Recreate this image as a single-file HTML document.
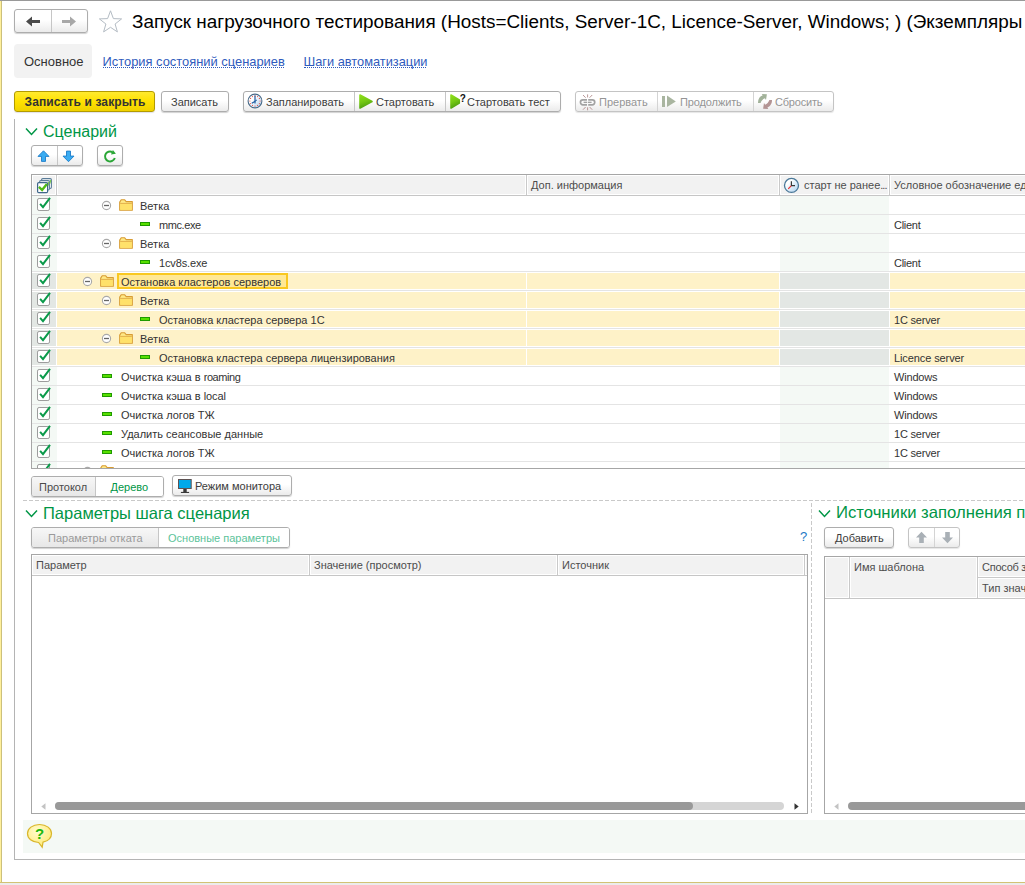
<!DOCTYPE html>
<html lang="ru">
<head>
<meta charset="utf-8">
<title>Запуск нагрузочного тестирования</title>
<style>
html,body{margin:0;padding:0;}
body{width:1025px;height:885px;position:relative;overflow:hidden;background:#fff;
 font-family:"Liberation Sans",sans-serif;font-size:11px;color:#333;}
.abs{position:absolute;}
.nw{white-space:nowrap;}
/* generic 1C button */
.btn{position:absolute;box-sizing:border-box;border:1px solid #adadad;border-radius:3px;
 background:linear-gradient(#ffffff 0%,#ffffff 45%,#ebebeb 100%);
 box-shadow:0 1px 1px rgba(0,0,0,.18);color:#3c3c3c;font-size:11px;line-height:18px;white-space:nowrap;}
.btn .t{position:absolute;top:1px;}
.sep{position:absolute;top:0;bottom:0;width:1px;background:#c6c6c6;}
.dis{color:#9a9a9a;}
.h{position:absolute;font-size:16.3px;color:#009646;white-space:nowrap;line-height:20px;}
.th{position:absolute;font-size:11px;color:#4d4d4d;white-space:nowrap;line-height:14px;}
.tx{position:absolute;font-size:11px;color:#333;white-space:nowrap;line-height:14px;}
.grid{position:absolute;box-sizing:border-box;border:1px solid #a6a6a6;background:#fff;overflow:hidden;}
</style>
</head>
<body>
<!-- window frame -->
<div class="abs" style="left:0;top:0;width:1025px;height:1px;background:#999;"></div>
<div class="abs" style="left:0;top:1px;width:1px;height:881px;background:#fff09c;"></div>
<div class="abs" style="left:1px;top:1px;width:1px;height:881px;background:#ccc07c;"></div>
<div class="abs" style="left:0;top:882px;width:1025px;height:1px;background:#d2c274;"></div>
<div class="abs" style="left:0;top:883px;width:1025px;height:2px;background:#ececec;"></div>

<!-- nav buttons -->
<div class="btn" id="nav" style="left:14px;top:9px;width:74px;height:24px;">
  <div class="sep" style="left:36px;"></div>
  <svg class="abs" style="left:11px;top:6px" width="15" height="11" viewBox="0 0 15 11"><path d="M0 5.5 L6 0.5 V4 H14 V7 H6 V10.5 Z" fill="#4a4a4a"/></svg>
  <svg class="abs" style="left:46px;top:6px" width="15" height="11" viewBox="0 0 15 11"><path d="M15 5.5 L9 0.5 V4 H1 V7 H9 V10.5 Z" fill="#a8a8a8"/></svg>
</div>
<!-- star -->
<svg class="abs" style="left:98px;top:9px" width="25" height="24" viewBox="0 0 25 24"><path d="M12.5 1.8 L15.4 9.6 L23.6 9.9 L17.1 15 L19.4 22.9 L12.5 18.3 L5.6 22.9 L7.9 15 L1.4 9.9 L9.6 9.6 Z" fill="#fff" stroke="#b4bcc4" stroke-width="1"/></svg>
<!-- title -->
<div class="abs nw" id="title" style="left:132px;top:10px;font-size:18.9px;line-height:24px;color:#000;">Запуск нагрузочного тестирования (Hosts=Clients, Server-1C, Licence-Server, Windows; ) (Экземпляры тестирования)</div>

<!-- tabs -->
<div class="abs" style="left:14px;top:44px;width:78px;height:34px;background:#f2f2f2;border-radius:4px;"></div>
<div class="abs nw" id="tab1" style="left:24px;top:54px;font-size:13px;line-height:16px;color:#333;">Основное</div>
<div class="abs nw lnk" id="tab2" style="left:102.5px;top:54px;font-size:12.9px;line-height:16px;color:#2f5bbd;">История состояний сценариев</div>
<div class="abs" style="left:103px;top:67px;width:181px;height:0;border-top:1px dotted #2f5bbd;"></div>
<div class="abs nw lnk" id="tab3" style="left:303.5px;top:54px;font-size:12.8px;line-height:16px;color:#2f5bbd;">Шаги автоматизации</div>
<div class="abs" style="left:304px;top:67px;width:122px;height:0;border-top:1px dotted #2f5bbd;"></div>

<!-- TOOLBAR -->
<!--TB--><div class="abs" id="b1" style="left:14px;top:91px;width:141px;height:21px;box-sizing:border-box;border:1px solid #b39b00;border-radius:3px;background:linear-gradient(#ffea30 0%,#ffe100 50%,#f0d200 100%);box-shadow:0 1px 1px rgba(0,0,60,.12);">
  <div class="abs nw" id="b1t" style="left:9.5px;top:3px;font-size:12px;font-weight:bold;line-height:15px;color:#333;letter-spacing:0.12px;">Записать и закрыть</div>
</div>
<div class="btn" id="b2" style="left:161px;top:91px;width:68px;height:21px;"><span class="t" style="left:9px;">Записать</span></div>
<div class="btn" id="g1" style="left:243px;top:91px;width:318px;height:21px;">
  <div class="sep" style="left:110px;"></div>
  <div class="sep" style="left:201px;"></div>
  <svg class="abs" style="left:3.3px;top:1.3px" width="16" height="16" viewBox="0 0 16 16">
    <defs><linearGradient id="ck" x1="0" y1="0" x2="1" y2="1"><stop offset="0.35" stop-color="#ffffff"/><stop offset="1" stop-color="#a9cdee"/></linearGradient></defs>
    <circle cx="8" cy="8" r="6.9" fill="url(#ck)" stroke="#4a6a88" stroke-width="1.1"/>
    <circle cx="8.00" cy="2.90" r="0.6" fill="#e8564a"/><circle cx="10.55" cy="3.58" r="0.6" fill="#e8564a"/><circle cx="12.42" cy="5.45" r="0.6" fill="#e8564a"/><circle cx="13.10" cy="8.00" r="0.6" fill="#e8564a"/><circle cx="12.42" cy="10.55" r="0.6" fill="#e8564a"/><circle cx="10.55" cy="12.42" r="0.6" fill="#e8564a"/><circle cx="8.00" cy="13.10" r="0.6" fill="#e8564a"/><circle cx="5.45" cy="12.42" r="0.6" fill="#e8564a"/><circle cx="3.58" cy="10.55" r="0.6" fill="#e8564a"/><circle cx="2.90" cy="8.00" r="0.6" fill="#e8564a"/><circle cx="3.58" cy="5.45" r="0.6" fill="#e8564a"/><circle cx="5.45" cy="3.58" r="0.6" fill="#e8564a"/>
    <path d="M8 2.4 V10.4" fill="none" stroke="#1f5aa0" stroke-width="1.2"/><path d="M8.2 8.3 L4.8 10.3" fill="none" stroke="#1f5aa0" stroke-width="1.2"/><path d="M8 8 L10 7" stroke="#1f5aa0" stroke-width="0.9"/>
  </svg>
  <span class="t" style="left:22px;">Запланировать</span>
  <svg class="abs" style="left:114px;top:1px" width="16" height="17" viewBox="0 0 16 17"><defs><linearGradient id="pg" x1="0" y1="0" x2="0.3" y2="1"><stop offset="0" stop-color="#8ede1a"/><stop offset="0.55" stop-color="#74c814"/><stop offset="1" stop-color="#4fa010"/></linearGradient></defs><path d="M2 2 L14 8.5 L2 15 Z" fill="url(#pg)" stroke="url(#pg)" stroke-width="1.6" stroke-linejoin="round"/></svg>
  <span class="t" style="left:132px;">Стартовать</span>
  <svg class="abs" style="left:205px;top:1px" width="18" height="17" viewBox="0 0 18 17"><path d="M2 2 L10.3 6.9 V10.1 L2 15 Z" fill="url(#pg)" stroke="url(#pg)" stroke-width="1.6" stroke-linejoin="round"/>
  <text x="10.8" y="8.8" font-family="Liberation Sans, sans-serif" font-weight="bold" font-size="10" fill="#111" stroke="#fff" stroke-width="1.4" paint-order="stroke">?</text></svg>
  <span class="t" style="left:223px;">Стартовать тест</span>
</div>
<div class="btn dis" id="g2" style="left:575px;top:91px;width:259px;height:21px;border-color:#c4c4c4;box-shadow:0 1px 1px rgba(0,0,0,.10);color:#959595;">
  <div class="sep" style="left:81px;background:#d4d4d4;"></div>
  <div class="sep" style="left:177px;background:#d4d4d4;"></div>
  <svg class="abs" style="left:3px;top:1px" width="17" height="18" viewBox="579 93 17 18" fill="none">
    <g stroke="#a2a2a2" stroke-width="1.7">
    <path d="M587 99.9 H582.9 a2.45 2.45 0 0 0 0 4.9 H587"/><path d="M583.6 102.35 H587.2" stroke-width="1.4"/>
    <path d="M588.2 99.9 H592.3 a2.45 2.45 0 0 1 0 4.9 H588.2"/><path d="M588 102.35 H591.6" stroke-width="1.4"/></g>
    <g stroke="#a87c7c" stroke-width="0.8">
    <path d="M587.6 94.4 V97.4 M583 95 L585.6 97.7 M592.2 95 L589.6 97.7"/>
    <path d="M587.6 110.3 V107.3 M583 109.7 L585.6 107 M592.2 109.7 L589.6 107"/></g>
  </svg>
  <span class="t" style="left:23px;">Прервать</span>
  <svg class="abs" style="left:85px;top:3px" width="16" height="13" viewBox="661 95 16 13"><rect x="662" y="96" width="3" height="11" fill="#a9b5a0"/><path d="M667 95.6 L675.8 101.4 L667 107 Z" fill="#a9b5a0"/></svg>
  <span class="t" style="left:104px;letter-spacing:-0.12px;">Продолжить</span>
  <svg class="abs" style="left:181px;top:1px" width="16" height="17" viewBox="757 93 16 17">
    <path d="M758 102.9 C757.9 99 760 96.3 762.6 95.6 L761.8 94 L766.9 94.3 L766 99.9 L764.9 98.3 C763 99 761.4 100.6 760.6 102.9 Z" fill="#a2b29a"/>
    <path d="M772 100.1 C772.1 104 770 106.7 767.4 107.4 L768.2 109 L763.1 108.7 L764 103.1 L765.1 104.7 C767 104 768.6 102.4 769.4 100.1 Z" fill="#b39494"/>
  </svg>
  <span class="t" style="left:199px;letter-spacing:-0.2px;">Сбросить</span>
</div><!--/TB-->

<!-- main frame -->
<div class="abs" style="left:14px;top:119px;width:1px;height:741px;background:#b4b4b4;"></div>
<div class="abs" style="left:14px;top:859px;width:1011px;height:1px;background:#b4b4b4;"></div>

<!-- SECTION1 -->
<!--S1--><svg class="abs" style="left:25px;top:127px" width="13" height="9" viewBox="0 0 13 9"><path d="M1 1.5 L6.5 7.5 L12 1.5" fill="none" stroke="#009646" stroke-width="1.5"/></svg>
<div class="h" id="h1" style="left:43px;top:121.5px;font-size:16px;">Сценарий</div>
<div class="btn" style="left:31px;top:145px;width:52px;height:21px;"><div class="sep" style="left:25px;"></div>
<svg class="abs" style="left:5px;top:4px" width="13" height="13" viewBox="0 0 13 13"><path d="M6.5 0.8 L12 6.4 H8.5 V11.4 H4.5 V6.4 H1 Z" fill="#3aacf2" stroke="#1c7cc8" stroke-width="0.9" stroke-linejoin="round"/></svg>
<svg class="abs" style="left:30px;top:4px" width="13" height="13" viewBox="0 0 13 13"><path d="M6.5 11.7 L12 6.1 H8.5 V1.1 H4.5 V6.1 H1 Z" fill="#3aacf2" stroke="#1c7cc8" stroke-width="0.9" stroke-linejoin="round"/></svg></div>
<div class="btn" style="left:97px;top:145px;width:26px;height:21px;">
<svg class="abs" style="left:5px;top:3px" width="14" height="14" viewBox="0 0 14 14"><path d="M11.8 9 A5 5 0 1 1 9.3 3" fill="none" stroke="#2aa636" stroke-width="2"/><path d="M9.9 0.9 L12.9 4.7 L8 5.4 Z" fill="#2aa636"/></svg></div>
<div class="grid" id="grid1" style="left:31px;top:174px;width:1000px;height:295px;border-right:none;">
<div class="abs" style="left:0;top:20px;width:1000px;height:1px;background:#c6c6c6;"></div>
<div class="abs" style="left:1px;top:1px;width:22px;height:18px;background:#f2f2f2;"></div>
<div class="abs" style="left:26px;top:1px;width:467px;height:18px;background:#f2f2f2;"></div>
<div class="abs" style="left:496px;top:1px;width:250px;height:18px;background:#f2f2f2;"></div>
<div class="abs" style="left:749px;top:1px;width:107px;height:18px;background:#f2f2f2;"></div>
<div class="abs" style="left:859px;top:1px;width:148px;height:18px;background:#f2f2f2;"></div>
<div class="abs" style="left:24px;top:0;width:1px;height:20px;background:#c9c9c9;"></div>
<div class="abs" style="left:494px;top:0;width:1px;height:20px;background:#c9c9c9;"></div>
<div class="abs" style="left:747px;top:0;width:1px;height:20px;background:#c9c9c9;"></div>
<div class="abs" style="left:857px;top:0;width:1px;height:20px;background:#c9c9c9;"></div>
<svg class="abs" style="left:4px;top:2px" width="17" height="17" viewBox="0 0 17 17">
<rect x="5.6" y="1.6" width="9.8" height="9.8" rx="1.2" fill="#fff" stroke="#5a7c98" stroke-width="1.1"/><path d="M14.6 3 L13.6 6.5" stroke="#7cc850" stroke-width="1.6"/>
<rect x="3.6" y="3.6" width="9.8" height="9.4" rx="1.2" fill="#fff" stroke="#5a7c98" stroke-width="1.1"/><path d="M12.6 5 L11.8 8.5" stroke="#7cc850" stroke-width="1.6"/>
<rect x="1.6" y="5.6" width="10" height="10" rx="1.2" fill="#fff" stroke="#3f678a" stroke-width="1.2"/>
<path d="M2.9 9.9 L6.1 13 L10.9 7" fill="none" stroke="#4fba16" stroke-width="2.4"/></svg>
<div class="th" style="left:499px;top:3px;">Доп. информация</div>
<svg class="abs" style="left:751px;top:2px" width="17" height="17" viewBox="0 0 17 17"><defs><linearGradient id="cg" x1="0" y1="0" x2="1" y2="1"><stop offset="0.3" stop-color="#ffffff"/><stop offset="1" stop-color="#a8d0f0"/></linearGradient></defs><circle cx="8.5" cy="8.4" r="7" fill="url(#cg)" stroke="#4a7898" stroke-width="1.3"/><path d="M8.4 4.2 V8.6 H12" fill="none" stroke="#383838" stroke-width="1.2"/><path d="M8 9 L5.1 12" stroke="#f01414" stroke-width="1.3" stroke-dasharray="1 0.4"/></svg>
<div class="th" style="left:772px;top:3px;">старт не ранее<span style="letter-spacing:-1px;">...</span></div>
<div class="th" style="left:862px;top:3px;">Условное обозначение единицы оборудования</div>
<div class="abs" style="left:0;top:21px;width:25px;height:280px;background:#f4f9f5;"></div>
<div class="abs" style="left:748px;top:21px;width:109px;height:280px;background:#f4f9f5;"></div>
<div class="abs" style="left:0;top:39px;width:1000px;height:1px;background:#e4e4e4;"></div>
<svg class="abs" style="left:4px;top:20px" width="16" height="16" viewBox="0 0 16 16"><rect x="1.5" y="3.5" width="12" height="12" rx="1.6" fill="#fff" stroke="#9c9c9c"/><path d="M4.1 8.9 L7 12.2 L14 2.9" fill="none" stroke="#0a9a4a" stroke-width="2"/></svg>
<svg class="abs" style="left:69px;top:25px" width="11" height="11" viewBox="0 0 11 11"><circle cx="5.5" cy="5.5" r="4.1" fill="#fff" stroke="#a9a9a9" stroke-width="1.1"/><path d="M3 5.5 H8" stroke="#666" stroke-width="1.3"/></svg>
<svg class="abs" style="left:87px;top:24px" width="14" height="12" viewBox="0 0 14 12"><path d="M0.7 11.3 V3.1 L2.2 0.7 H5.5 L7.2 2.6 H13.3 V11.3 Z" fill="#ffe986" stroke="#d89c34" stroke-width="1.1" stroke-linejoin="round"/><path d="M1.2 4.7 H12.8 V10.8 H1.2 Z" fill="#ffe16a"/><path d="M1.2 4.4 H12.8" stroke="#e0aa44" stroke-width="0.9"/></svg>
<div class="tx" style="left:108px;top:24px;">Ветка</div>
<div class="abs" style="left:0;top:58px;width:1000px;height:1px;background:#e4e4e4;"></div>
<svg class="abs" style="left:4px;top:39px" width="16" height="16" viewBox="0 0 16 16"><rect x="1.5" y="3.5" width="12" height="12" rx="1.6" fill="#fff" stroke="#9c9c9c"/><path d="M4.1 8.9 L7 12.2 L14 2.9" fill="none" stroke="#0a9a4a" stroke-width="2"/></svg>
<div class="abs" style="left:108px;top:47px;width:10px;height:4px;box-sizing:border-box;border:1px solid #1f9a00;background:#58e000;"></div>
<div class="tx" style="left:127px;top:43px;letter-spacing:-0.42px;">mmc.exe</div>
<div class="tx" style="left:862px;top:43px;letter-spacing:-0.28px;">Client</div>
<div class="abs" style="left:0;top:77px;width:1000px;height:1px;background:#e4e4e4;"></div>
<svg class="abs" style="left:4px;top:58px" width="16" height="16" viewBox="0 0 16 16"><rect x="1.5" y="3.5" width="12" height="12" rx="1.6" fill="#fff" stroke="#9c9c9c"/><path d="M4.1 8.9 L7 12.2 L14 2.9" fill="none" stroke="#0a9a4a" stroke-width="2"/></svg>
<svg class="abs" style="left:69px;top:63px" width="11" height="11" viewBox="0 0 11 11"><circle cx="5.5" cy="5.5" r="4.1" fill="#fff" stroke="#a9a9a9" stroke-width="1.1"/><path d="M3 5.5 H8" stroke="#666" stroke-width="1.3"/></svg>
<svg class="abs" style="left:87px;top:62px" width="14" height="12" viewBox="0 0 14 12"><path d="M0.7 11.3 V3.1 L2.2 0.7 H5.5 L7.2 2.6 H13.3 V11.3 Z" fill="#ffe986" stroke="#d89c34" stroke-width="1.1" stroke-linejoin="round"/><path d="M1.2 4.7 H12.8 V10.8 H1.2 Z" fill="#ffe16a"/><path d="M1.2 4.4 H12.8" stroke="#e0aa44" stroke-width="0.9"/></svg>
<div class="tx" style="left:108px;top:62px;">Ветка</div>
<div class="abs" style="left:0;top:96px;width:1000px;height:1px;background:#e4e4e4;"></div>
<svg class="abs" style="left:4px;top:77px" width="16" height="16" viewBox="0 0 16 16"><rect x="1.5" y="3.5" width="12" height="12" rx="1.6" fill="#fff" stroke="#9c9c9c"/><path d="M4.1 8.9 L7 12.2 L14 2.9" fill="none" stroke="#0a9a4a" stroke-width="2"/></svg>
<div class="abs" style="left:108px;top:85px;width:10px;height:4px;box-sizing:border-box;border:1px solid #1f9a00;background:#58e000;"></div>
<div class="tx" style="left:127px;top:81px;letter-spacing:-0.14px;">1cv8s.exe</div>
<div class="tx" style="left:862px;top:81px;letter-spacing:-0.28px;">Client</div>
<div class="abs" style="left:0;top:97px;width:1000px;height:18px;background:#fff;"></div>
<div class="abs" style="left:0;top:98px;width:24px;height:16px;background:#e3e7e4;"></div>
<div class="abs" style="left:25px;top:98px;width:469px;height:16px;background:#fef2c8;"></div>
<div class="abs" style="left:495px;top:98px;width:252px;height:16px;background:#fef2c8;"></div>
<div class="abs" style="left:748px;top:98px;width:109px;height:16px;background:#e3e7e4;"></div>
<div class="abs" style="left:858px;top:98px;width:200px;height:16px;background:#fef2c8;"></div>
<div class="abs" style="left:0;top:115px;width:1000px;height:1px;background:#e4e4e4;"></div>
<svg class="abs" style="left:4px;top:96px" width="16" height="16" viewBox="0 0 16 16"><rect x="1.5" y="3.5" width="12" height="12" rx="1.6" fill="#fff" stroke="#9c9c9c"/><path d="M4.1 8.9 L7 12.2 L14 2.9" fill="none" stroke="#0a9a4a" stroke-width="2"/></svg>
<svg class="abs" style="left:50px;top:101px" width="11" height="11" viewBox="0 0 11 11"><circle cx="5.5" cy="5.5" r="4.1" fill="#fff" stroke="#a9a9a9" stroke-width="1.1"/><path d="M3 5.5 H8" stroke="#666" stroke-width="1.3"/></svg>
<svg class="abs" style="left:68px;top:100px" width="14" height="12" viewBox="0 0 14 12"><path d="M0.7 11.3 V3.1 L2.2 0.7 H5.5 L7.2 2.6 H13.3 V11.3 Z" fill="#ffe986" stroke="#d89c34" stroke-width="1.1" stroke-linejoin="round"/><path d="M1.2 4.7 H12.8 V10.8 H1.2 Z" fill="#ffe16a"/><path d="M1.2 4.4 H12.8" stroke="#e0aa44" stroke-width="0.9"/></svg>
<div class="abs" style="left:85px;top:98px;width:171px;height:16px;box-sizing:border-box;border:2px solid #f9c820;background:#ffe896;"></div>
<div class="tx" style="left:89px;top:100px;">Остановка кластеров серверов</div>
<div class="abs" style="left:0;top:116px;width:1000px;height:18px;background:#fff;"></div>
<div class="abs" style="left:0;top:117px;width:24px;height:16px;background:#e3e7e4;"></div>
<div class="abs" style="left:25px;top:117px;width:469px;height:16px;background:#fef2c8;"></div>
<div class="abs" style="left:495px;top:117px;width:252px;height:16px;background:#fef2c8;"></div>
<div class="abs" style="left:748px;top:117px;width:109px;height:16px;background:#e3e7e4;"></div>
<div class="abs" style="left:858px;top:117px;width:200px;height:16px;background:#fef2c8;"></div>
<div class="abs" style="left:0;top:134px;width:1000px;height:1px;background:#e4e4e4;"></div>
<svg class="abs" style="left:4px;top:115px" width="16" height="16" viewBox="0 0 16 16"><rect x="1.5" y="3.5" width="12" height="12" rx="1.6" fill="#fff" stroke="#9c9c9c"/><path d="M4.1 8.9 L7 12.2 L14 2.9" fill="none" stroke="#0a9a4a" stroke-width="2"/></svg>
<svg class="abs" style="left:69px;top:120px" width="11" height="11" viewBox="0 0 11 11"><circle cx="5.5" cy="5.5" r="4.1" fill="#fff" stroke="#a9a9a9" stroke-width="1.1"/><path d="M3 5.5 H8" stroke="#666" stroke-width="1.3"/></svg>
<svg class="abs" style="left:87px;top:119px" width="14" height="12" viewBox="0 0 14 12"><path d="M0.7 11.3 V3.1 L2.2 0.7 H5.5 L7.2 2.6 H13.3 V11.3 Z" fill="#ffe986" stroke="#d89c34" stroke-width="1.1" stroke-linejoin="round"/><path d="M1.2 4.7 H12.8 V10.8 H1.2 Z" fill="#ffe16a"/><path d="M1.2 4.4 H12.8" stroke="#e0aa44" stroke-width="0.9"/></svg>
<div class="tx" style="left:108px;top:119px;">Ветка</div>
<div class="abs" style="left:0;top:135px;width:1000px;height:18px;background:#fff;"></div>
<div class="abs" style="left:0;top:136px;width:24px;height:16px;background:#e3e7e4;"></div>
<div class="abs" style="left:25px;top:136px;width:469px;height:16px;background:#fef2c8;"></div>
<div class="abs" style="left:495px;top:136px;width:252px;height:16px;background:#fef2c8;"></div>
<div class="abs" style="left:748px;top:136px;width:109px;height:16px;background:#e3e7e4;"></div>
<div class="abs" style="left:858px;top:136px;width:200px;height:16px;background:#fef2c8;"></div>
<div class="abs" style="left:0;top:153px;width:1000px;height:1px;background:#e4e4e4;"></div>
<svg class="abs" style="left:4px;top:134px" width="16" height="16" viewBox="0 0 16 16"><rect x="1.5" y="3.5" width="12" height="12" rx="1.6" fill="#fff" stroke="#9c9c9c"/><path d="M4.1 8.9 L7 12.2 L14 2.9" fill="none" stroke="#0a9a4a" stroke-width="2"/></svg>
<div class="abs" style="left:108px;top:142px;width:10px;height:4px;box-sizing:border-box;border:1px solid #1f9a00;background:#58e000;"></div>
<div class="tx" style="left:127px;top:138px;">Остановка кластера сервера 1С</div>
<div class="tx" style="left:862px;top:138px;letter-spacing:-0.2px;">1C server</div>
<div class="abs" style="left:0;top:154px;width:1000px;height:18px;background:#fff;"></div>
<div class="abs" style="left:0;top:155px;width:24px;height:16px;background:#e3e7e4;"></div>
<div class="abs" style="left:25px;top:155px;width:469px;height:16px;background:#fef2c8;"></div>
<div class="abs" style="left:495px;top:155px;width:252px;height:16px;background:#fef2c8;"></div>
<div class="abs" style="left:748px;top:155px;width:109px;height:16px;background:#e3e7e4;"></div>
<div class="abs" style="left:858px;top:155px;width:200px;height:16px;background:#fef2c8;"></div>
<div class="abs" style="left:0;top:172px;width:1000px;height:1px;background:#e4e4e4;"></div>
<svg class="abs" style="left:4px;top:153px" width="16" height="16" viewBox="0 0 16 16"><rect x="1.5" y="3.5" width="12" height="12" rx="1.6" fill="#fff" stroke="#9c9c9c"/><path d="M4.1 8.9 L7 12.2 L14 2.9" fill="none" stroke="#0a9a4a" stroke-width="2"/></svg>
<svg class="abs" style="left:69px;top:158px" width="11" height="11" viewBox="0 0 11 11"><circle cx="5.5" cy="5.5" r="4.1" fill="#fff" stroke="#a9a9a9" stroke-width="1.1"/><path d="M3 5.5 H8" stroke="#666" stroke-width="1.3"/></svg>
<svg class="abs" style="left:87px;top:157px" width="14" height="12" viewBox="0 0 14 12"><path d="M0.7 11.3 V3.1 L2.2 0.7 H5.5 L7.2 2.6 H13.3 V11.3 Z" fill="#ffe986" stroke="#d89c34" stroke-width="1.1" stroke-linejoin="round"/><path d="M1.2 4.7 H12.8 V10.8 H1.2 Z" fill="#ffe16a"/><path d="M1.2 4.4 H12.8" stroke="#e0aa44" stroke-width="0.9"/></svg>
<div class="tx" style="left:108px;top:157px;">Ветка</div>
<div class="abs" style="left:0;top:173px;width:1000px;height:18px;background:#fff;"></div>
<div class="abs" style="left:0;top:174px;width:24px;height:16px;background:#e3e7e4;"></div>
<div class="abs" style="left:25px;top:174px;width:469px;height:16px;background:#fef2c8;"></div>
<div class="abs" style="left:495px;top:174px;width:252px;height:16px;background:#fef2c8;"></div>
<div class="abs" style="left:748px;top:174px;width:109px;height:16px;background:#e3e7e4;"></div>
<div class="abs" style="left:858px;top:174px;width:200px;height:16px;background:#fef2c8;"></div>
<div class="abs" style="left:0;top:191px;width:1000px;height:1px;background:#e4e4e4;"></div>
<svg class="abs" style="left:4px;top:172px" width="16" height="16" viewBox="0 0 16 16"><rect x="1.5" y="3.5" width="12" height="12" rx="1.6" fill="#fff" stroke="#9c9c9c"/><path d="M4.1 8.9 L7 12.2 L14 2.9" fill="none" stroke="#0a9a4a" stroke-width="2"/></svg>
<div class="abs" style="left:108px;top:180px;width:10px;height:4px;box-sizing:border-box;border:1px solid #1f9a00;background:#58e000;"></div>
<div class="tx" style="left:127px;top:176px;">Остановка кластера сервера лицензирования</div>
<div class="tx" style="left:862px;top:176px;letter-spacing:-0.1px;">Licence server</div>
<div class="abs" style="left:0;top:210px;width:1000px;height:1px;background:#e4e4e4;"></div>
<svg class="abs" style="left:4px;top:191px" width="16" height="16" viewBox="0 0 16 16"><rect x="1.5" y="3.5" width="12" height="12" rx="1.6" fill="#fff" stroke="#9c9c9c"/><path d="M4.1 8.9 L7 12.2 L14 2.9" fill="none" stroke="#0a9a4a" stroke-width="2"/></svg>
<div class="abs" style="left:70px;top:199px;width:10px;height:4px;box-sizing:border-box;border:1px solid #1f9a00;background:#58e000;"></div>
<div class="tx" style="left:89px;top:195px;">Очистка кэша в <span style="letter-spacing:-0.42px">roaming</span></div>
<div class="tx" style="left:862px;top:195px;letter-spacing:-0.18px;">Windows</div>
<div class="abs" style="left:0;top:229px;width:1000px;height:1px;background:#e4e4e4;"></div>
<svg class="abs" style="left:4px;top:210px" width="16" height="16" viewBox="0 0 16 16"><rect x="1.5" y="3.5" width="12" height="12" rx="1.6" fill="#fff" stroke="#9c9c9c"/><path d="M4.1 8.9 L7 12.2 L14 2.9" fill="none" stroke="#0a9a4a" stroke-width="2"/></svg>
<div class="abs" style="left:70px;top:218px;width:10px;height:4px;box-sizing:border-box;border:1px solid #1f9a00;background:#58e000;"></div>
<div class="tx" style="left:89px;top:214px;">Очистка кэша в <span style="letter-spacing:-0.1px">local</span></div>
<div class="tx" style="left:862px;top:214px;letter-spacing:-0.18px;">Windows</div>
<div class="abs" style="left:0;top:248px;width:1000px;height:1px;background:#e4e4e4;"></div>
<svg class="abs" style="left:4px;top:229px" width="16" height="16" viewBox="0 0 16 16"><rect x="1.5" y="3.5" width="12" height="12" rx="1.6" fill="#fff" stroke="#9c9c9c"/><path d="M4.1 8.9 L7 12.2 L14 2.9" fill="none" stroke="#0a9a4a" stroke-width="2"/></svg>
<div class="abs" style="left:70px;top:237px;width:10px;height:4px;box-sizing:border-box;border:1px solid #1f9a00;background:#58e000;"></div>
<div class="tx" style="left:89px;top:233px;">Очистка логов ТЖ</div>
<div class="tx" style="left:862px;top:233px;letter-spacing:-0.18px;">Windows</div>
<div class="abs" style="left:0;top:267px;width:1000px;height:1px;background:#e4e4e4;"></div>
<svg class="abs" style="left:4px;top:248px" width="16" height="16" viewBox="0 0 16 16"><rect x="1.5" y="3.5" width="12" height="12" rx="1.6" fill="#fff" stroke="#9c9c9c"/><path d="M4.1 8.9 L7 12.2 L14 2.9" fill="none" stroke="#0a9a4a" stroke-width="2"/></svg>
<div class="abs" style="left:70px;top:256px;width:10px;height:4px;box-sizing:border-box;border:1px solid #1f9a00;background:#58e000;"></div>
<div class="tx" style="left:89px;top:252px;">Удалить сеансовые данные</div>
<div class="tx" style="left:862px;top:252px;letter-spacing:-0.2px;">1C server</div>
<div class="abs" style="left:0;top:286px;width:1000px;height:1px;background:#e4e4e4;"></div>
<svg class="abs" style="left:4px;top:267px" width="16" height="16" viewBox="0 0 16 16"><rect x="1.5" y="3.5" width="12" height="12" rx="1.6" fill="#fff" stroke="#9c9c9c"/><path d="M4.1 8.9 L7 12.2 L14 2.9" fill="none" stroke="#0a9a4a" stroke-width="2"/></svg>
<div class="abs" style="left:70px;top:275px;width:10px;height:4px;box-sizing:border-box;border:1px solid #1f9a00;background:#58e000;"></div>
<div class="tx" style="left:89px;top:271px;">Очистка логов ТЖ</div>
<div class="tx" style="left:862px;top:271px;letter-spacing:-0.2px;">1C server</div>
<div class="abs" style="left:0;top:305px;width:1000px;height:1px;background:#e4e4e4;"></div>
<svg class="abs" style="left:4px;top:286px" width="16" height="16" viewBox="0 0 16 16"><rect x="1.5" y="3.5" width="12" height="12" rx="1.6" fill="#fff" stroke="#9c9c9c"/><path d="M4.1 8.9 L7 12.2 L14 2.9" fill="none" stroke="#0a9a4a" stroke-width="2"/></svg>
<svg class="abs" style="left:50px;top:291px" width="11" height="11" viewBox="0 0 11 11"><circle cx="5.5" cy="5.5" r="4.1" fill="#fff" stroke="#a9a9a9" stroke-width="1.1"/><path d="M3 5.5 H8" stroke="#666" stroke-width="1.3"/></svg>
<svg class="abs" style="left:68px;top:290px" width="14" height="12" viewBox="0 0 14 12"><path d="M0.7 11.3 V3.1 L2.2 0.7 H5.5 L7.2 2.6 H13.3 V11.3 Z" fill="#ffe986" stroke="#d89c34" stroke-width="1.1" stroke-linejoin="round"/><path d="M1.2 4.7 H12.8 V10.8 H1.2 Z" fill="#ffe16a"/><path d="M1.2 4.4 H12.8" stroke="#e0aa44" stroke-width="0.9"/></svg>
<div class="tx" style="left:89px;top:290px;">Запуск кластеров серверов</div>
</div>
<div class="btn" id="g3" style="left:31px;top:476px;width:133px;height:21px;">
<div class="abs" style="left:0;top:0;width:63px;height:19px;background:linear-gradient(#f7f7f7,#e7e7e7);border-radius:2px 0 0 2px;"></div>
<div class="sep" style="left:63px;"></div>
<div class="abs" style="left:64px;top:0;width:67px;height:19px;background:#fff;border-radius:0 2px 2px 0;"></div>
<span class="t" style="left:7px;color:#4a4a4a;">Протокол</span><span class="t" style="left:78.5px;color:#009646;">Дерево</span></div>
<div class="btn" id="b5" style="left:172px;top:475px;width:120px;height:21px;">
<svg class="abs" style="left:5px;top:3px" width="15" height="15" viewBox="0 0 15 15"><rect x="0.5" y="0.5" width="12.7" height="9" fill="#00a9ea" stroke="#5e5252"/><rect x="5.3" y="10" width="3.4" height="3.2" fill="#3a3a3a"/><rect x="2.9" y="12.9" width="8.2" height="1.1" fill="#3a3a3a"/></svg>
<span class="t" style="left:22px;top:1px;">Режим монитора</span></div>
<div class="abs" style="left:23px;top:500px;width:1002px;height:1px;background:repeating-linear-gradient(90deg,#c9c9c9 0,#c9c9c9 4px,transparent 4px,transparent 6px);"></div><!--/S1-->
<!-- SECTION2 -->
<!--S2--><svg class="abs" style="left:25px;top:509px" width="13" height="9" viewBox="0 0 13 9"><path d="M1 1.5 L6.5 7.5 L12 1.5" fill="none" stroke="#009646" stroke-width="1.5"/></svg>
<div class="h" id="h2" style="left:43px;top:503px;font-size:16.5px;">Параметры шага сценария</div>
<div class="btn" id="g4" style="left:31px;top:527px;width:259px;height:21px;">
<div class="abs" style="left:0;top:0;width:126px;height:19px;background:linear-gradient(#f7f7f7,#e7e7e7);border-radius:2px 0 0 2px;"></div>
<div class="sep" style="left:126px;"></div>
<div class="abs" style="left:127px;top:0;width:130px;height:19px;background:#fff;border-radius:0 2px 2px 0;"></div>
<span class="t" style="left:16px;color:#9a9a9a;">Параметры отката</span><span class="t" style="left:136px;color:#5cc39a;">Основные параметры</span></div>
<div class="abs nw" style="left:800px;top:529px;font-size:13px;line-height:15px;color:#1c78c4;">?</div>
<div class="grid" id="grid2" style="left:31px;top:554px;width:777px;height:260px;">
<div class="abs" style="left:0;top:20px;width:775px;height:1px;background:#c6c6c6;"></div>
<div class="abs" style="left:1px;top:1px;width:275px;height:18px;background:#f2f2f2;"></div>
<div class="abs" style="left:279px;top:1px;width:245px;height:18px;background:#f2f2f2;"></div>
<div class="abs" style="left:527px;top:1px;width:244px;height:18px;background:#f2f2f2;"></div>
<div class="abs" style="left:774px;top:1px;width:5px;height:18px;background:#f2f2f2;"></div>
<div class="abs" style="left:277px;top:0;width:1px;height:20px;background:#c9c9c9;"></div>
<div class="abs" style="left:525px;top:0;width:1px;height:20px;background:#c9c9c9;"></div>
<div class="abs" style="left:772px;top:0;width:1px;height:20px;background:#c9c9c9;"></div>
<div class="th" style="left:4px;top:3px;">Параметр</div>
<div class="th" style="left:282px;top:3px;">Значение (просмотр)</div>
<div class="th" style="left:530px;top:3px;">Источник</div>
<svg class="abs" style="left:9px;top:248px" width="5" height="7" viewBox="0 0 5 7"><path d="M4.5 0.3 V6.7 L0.3 3.5 Z" fill="#c3c3c3"/></svg>
<div class="abs" style="left:23px;top:247px;width:729px;height:8px;border-radius:4px;background:#d5d5d5;"></div>
<div class="abs" style="left:23px;top:247px;width:638px;height:8px;border-radius:4px;background:#999;"></div>
<svg class="abs" style="left:762px;top:248px" width="5" height="7" viewBox="0 0 5 7"><path d="M0.5 0.3 V6.7 L4.7 3.5 Z" fill="#333"/></svg>
</div>
<div class="abs" style="left:811px;top:503px;width:1px;height:310px;background:repeating-linear-gradient(180deg,#c9c9c9 0,#c9c9c9 4px,transparent 4px,transparent 6px);"></div>
<svg class="abs" style="left:818px;top:509px" width="13" height="9" viewBox="0 0 13 9"><path d="M1 1.5 L6.5 7.5 L12 1.5" fill="none" stroke="#009646" stroke-width="1.5"/></svg>
<div class="h" id="h3" style="left:836px;top:503px;font-size:16.68px;">Источники заполнения параметров</div>
<div class="btn" id="b6" style="left:824px;top:527px;width:70px;height:21px;"><span class="t" style="left:10px;">Добавить</span></div>
<div class="btn" id="g5" style="left:908px;top:527px;width:52px;height:21px;border-color:#c4c4c4;box-shadow:0 1px 1px rgba(0,0,0,.10);"><div class="sep" style="left:25px;background:#d4d4d4;"></div>
<svg class="abs" style="left:6px;top:3px" width="13" height="13" viewBox="0 0 13 13"><path d="M6.5 0.8 L12 6.6 H8.8 V12 H4.2 V6.6 H1 Z" fill="#a9b0b6"/></svg>
<svg class="abs" style="left:32px;top:3px" width="13" height="13" viewBox="0 0 13 13"><path d="M6.5 12.2 L12 6.4 H8.8 V1 H4.2 V6.4 H1 Z" fill="#a9b0b6"/></svg></div>
<div class="grid" id="grid3" style="left:824px;top:556px;width:260px;height:258px;border-right:none;">
<div class="abs" style="left:0;top:41px;width:260px;height:1px;background:#c6c6c6;"></div>
<div class="abs" style="left:1px;top:1px;width:22px;height:39px;background:#f2f2f2;"></div>
<div class="abs" style="left:26px;top:1px;width:125px;height:39px;background:#f2f2f2;"></div>
<div class="abs" style="left:154px;top:1px;width:110px;height:18px;background:#f2f2f2;"></div>
<div class="abs" style="left:154px;top:22px;width:110px;height:18px;background:#f2f2f2;"></div>
<div class="abs" style="left:24px;top:0;width:1px;height:41px;background:#c9c9c9;"></div>
<div class="abs" style="left:152px;top:0;width:1px;height:41px;background:#c9c9c9;"></div>
<div class="abs" style="left:153px;top:20px;width:110px;height:1px;background:#c9c9c9;"></div>
<div class="th" style="left:29px;top:3px;">Имя шаблона</div>
<div class="th" style="left:157px;top:3px;letter-spacing:-0.25px;">Способ заполнения</div>
<div class="th" style="left:157px;top:24px;">Тип значения</div>
<svg class="abs" style="left:9px;top:246px" width="5" height="7" viewBox="0 0 5 7"><path d="M4.5 0.3 V6.7 L0.3 3.5 Z" fill="#c3c3c3"/></svg>
<div class="abs" style="left:23px;top:245px;width:300px;height:8px;border-radius:4px;background:#999;"></div>
</div><!--/S2-->
<!-- SECTION3 -->


<!-- bottom band -->
<div class="abs" style="left:23px;top:820px;width:1002px;height:33px;background:#f4f9f5;"></div>
<!--HB--><svg class="abs" style="left:26px;top:823px" width="28" height="26" viewBox="0 0 28 26"><defs><radialGradient id="hb" cx="0.4" cy="0.3" r="0.8"><stop offset="0" stop-color="#fffbd0"/><stop offset="1" stop-color="#ffe96a"/></radialGradient></defs>
<path d="M13.5 1.5 C20.5 1.5 25.5 5.5 25.5 10.5 C25.5 14.6 22 18 17 19.2 L16.2 24.2 L12.6 19.5 C6 19.2 1.5 15.4 1.5 10.5 C1.5 5.5 6.5 1.5 13.5 1.5 Z" fill="url(#hb)" stroke="#d9b62c" stroke-width="1.2"/>
<text x="13.5" y="15.5" text-anchor="middle" font-family="Liberation Sans, sans-serif" font-weight="bold" font-size="15" fill="#1fb80c">?</text></svg><!--/HB-->
</body>
</html>
